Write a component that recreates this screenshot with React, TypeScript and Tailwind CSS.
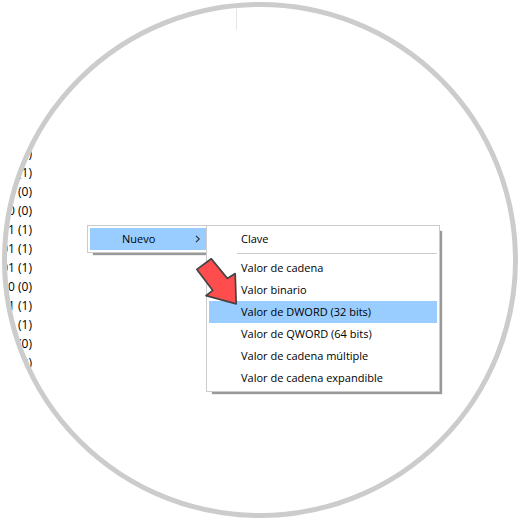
import React from 'react';

const values = [
  '00 (0)',
  '01 (1)',
  '00 (0)',
  '00 (0)',
  '01 (1)',
  '01 (1)',
  '01 (1)',
  '00 (0)',
  '01 (1)',
  '01 (1)',
  '00 (0)',
  '00 (0)',
];

const valueTypes = [
  'Valor de cadena',
  'Valor binario',
  'Valor de DWORD (32 bits)',
  'Valor de QWORD (64 bits)',
  'Valor de cadena múltiple',
  'Valor de cadena expandible',
];

const menuClass = 'border border-[#ccc] bg-white p-0.5 shadow-[4px_4px_1px_-2px_#999]';

export default function App() {
  return (
    <main className="bg-white p-0.5 font-['Open_Sans',sans-serif] text-[11px] text-black">
      <div className="aspect-square w-full overflow-hidden rounded-full border-5 border-[#ccc]">
        {/* column edge of the list header */}
        <div className="h-[23px] w-[230px] border-r border-[#e5e5e5]" />

        <div className="flex items-start">
          <ul className="w-[25px] shrink-0 pt-[114px] text-[12px]">
            {values.map((value, i) => (
              <li key={i} className="flex h-[19px] items-center justify-end whitespace-nowrap">
                {value}
              </li>
            ))}
          </ul>

          <div className="mt-[195px] ml-[55px] flex items-start">
            <div role="menu" className={`${menuClass} w-[119px] border-r-0 pr-0`}>
              <MenuItem label="Nuevo" active hasSubmenu />
            </div>
            <div role="menu" className={`${menuClass} relative w-[234px]`}>
              <MenuItem label="Clave" />
              <hr className="my-[3px] ml-7 border-[#ccc]" />
              {valueTypes.map((label) => (
                <MenuItem key={label} label={label} active={label === 'Valor de DWORD (32 bits)'} />
              ))}
              <PointerArrow />
            </div>
          </div>
        </div>
      </div>
    </main>
  );
}

const MenuItem = ({ label, active = false, hasSubmenu = false }: any) => (
  <button
    type="button"
    role="menuitem"
    className={`flex h-[22px] w-full items-center justify-between pr-1 pl-8 text-left whitespace-nowrap ${active ? 'bg-[#99ccff]' : ''}`}
  >
    {label}
    {hasSubmenu && (
      <svg width="8" height="8" viewBox="0 0 8 8" fill="none" stroke="#333" strokeWidth="1.2" aria-hidden="true">
        <path d="M2 0.8 L5.2 4 L2 7.2" />
      </svg>
    )}
  </button>
);

const PointerArrow = () => (
  <svg
    className="pointer-events-none absolute top-[30px] left-[-13px]"
    width="44"
    height="50"
    viewBox="0 0 44 50"
    aria-hidden="true"
  >
    <path
      d="M17.3 2.8 L33.3 22.4 L41.2 17.6 L42.2 47.9 L12 39.6 L18.8 34.4 L2.9 13.4 Z"
      fill="#ff4646"
      fillOpacity="0.97"
      stroke="#444"
      strokeWidth="1.7"
      strokeLinejoin="round"
    />
  </svg>
);
